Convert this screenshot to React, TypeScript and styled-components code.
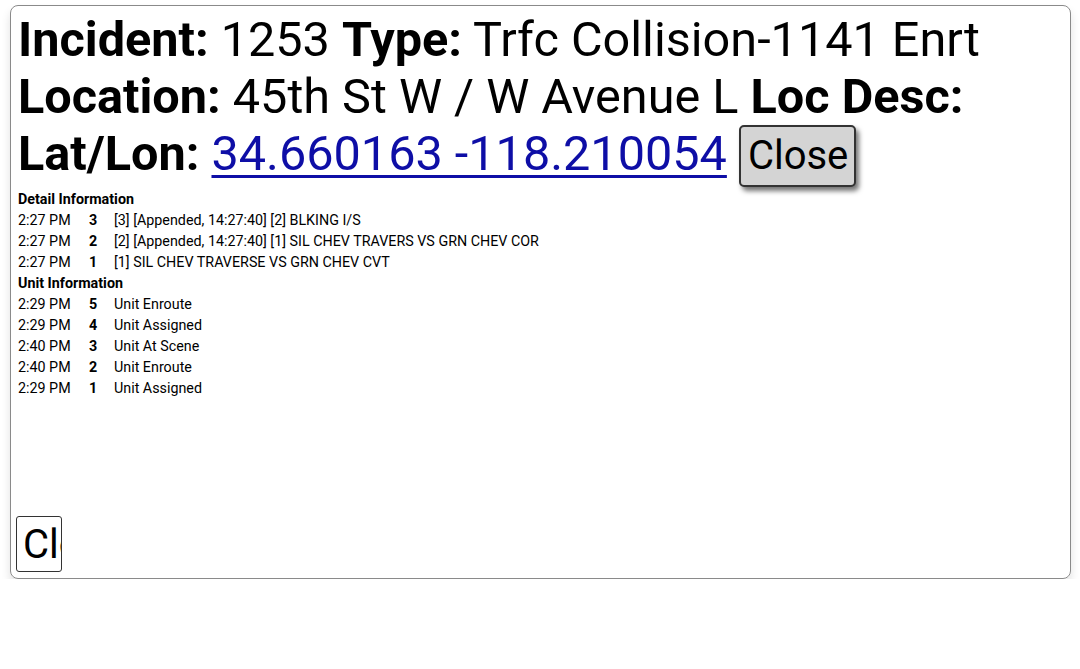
import React from "react";
import styled, { createGlobalStyle } from "styled-components";

const GlobalStyle = createGlobalStyle`
  html, body {
    margin: 0;
    padding: 0;
    background: #ffffff;
    font-family: Roboto, "Liberation Sans", sans-serif;
    color: #000;
  }
`;

const Page = styled.div`
  padding: 5px 9px 0 10px;
`;

const Panel = styled.div`
  box-sizing: border-box;
  height: 574px;
  border: 1px solid #8a8a8a;
  border-radius: 8px;
  box-shadow: 0 6px 10px rgba(0, 0, 0, 0.12);
  padding: 5px 8px 6px 7px;
  display: flex;
  flex-direction: column;
`;

const Header = styled.div`
  font-size: 48.6px;
  line-height: 57px;
  b {
    font-weight: 700;
  }
`;

const CoordLink = styled.a`
  color: #0e0ea6;
  text-decoration: underline;
  text-decoration-thickness: 3px;
  text-underline-offset: 5px;
`;

const CloseButton = styled.button`
  box-sizing: border-box;
  height: 62px;
  font-family: Roboto, "Liberation Sans", sans-serif;
  font-size: 40px;
  line-height: 46px;
  padding: 0 6px 0 7px;
  margin-left: 12px;
  background: #d4d4d4;
  color: #000;
  border: 2px solid #333;
  border-radius: 5px;
  box-shadow: 3px 4px 5px rgba(0, 0, 0, 0.55);
  vertical-align: top;
`;

const Info = styled.table`
  border-collapse: collapse;
  font-size: 14.3px;
  line-height: 21px;
  margin-top: 2px;
  td {
    padding: 0;
    white-space: nowrap;
  }
`;

const SectionTitle = styled.td`
  font-weight: 700;
`;

const TimeCell = styled.td`
  width: 71px;
`;

const NumCell = styled.td`
  width: 25px;
  font-weight: 700;
`;

const Spacer = styled.div`
  flex: 1;
`;

const StubButton = styled.button`
  width: 46px;
  height: 56px;
  padding: 0 0 0 6px;
  margin-left: -2px;
  overflow: hidden;
  white-space: nowrap;
  text-align: left;
  font-family: Roboto, "Liberation Sans", sans-serif;
  font-size: 40px;
  background: #fff;
  color: #000;
  border: 1px solid #333;
  border-radius: 3px;
`;

type Entry = { time: string; num: number; text: string };

const details: Entry[] = [
  { time: "2:27 PM", num: 3, text: "[3] [Appended, 14:27:40] [2] BLKING I/S" },
  { time: "2:27 PM", num: 2, text: "[2] [Appended, 14:27:40] [1] SIL CHEV TRAVERS VS GRN CHEV COR" },
  { time: "2:27 PM", num: 1, text: "[1] SIL CHEV TRAVERSE VS GRN CHEV CVT" },
];

const units: Entry[] = [
  { time: "2:29 PM", num: 5, text: "Unit Enroute" },
  { time: "2:29 PM", num: 4, text: "Unit Assigned" },
  { time: "2:40 PM", num: 3, text: "Unit At Scene" },
  { time: "2:40 PM", num: 2, text: "Unit Enroute" },
  { time: "2:29 PM", num: 1, text: "Unit Assigned" },
];

function Rows({ title, items }: { title: string; items: Entry[] }) {
  return (
    <>
      <tr>
        <SectionTitle colSpan={3}>{title}</SectionTitle>
      </tr>
      {items.map((e, i) => (
        <tr key={i}>
          <TimeCell>{e.time}</TimeCell>
          <NumCell>{e.num}</NumCell>
          <td>{e.text}</td>
        </tr>
      ))}
    </>
  );
}

export default function App() {
  return (
    <>
      <GlobalStyle />
      <Page>
        <Panel>
          <Header>
            <b>Incident:</b> 1253 <b>Type:</b> Trfc Collision-1141 Enrt
            <br />
            <b>Location:</b> 45th St W / W Avenue L <b>Loc Desc:</b>
            <br />
            <b>Lat/Lon:</b> <CoordLink href="#">34.660163 -118.210054</CoordLink>
            <CloseButton>Close</CloseButton>
          </Header>
          <Info>
            <tbody>
              <Rows title="Detail Information" items={details} />
              <Rows title="Unit Information" items={units} />
            </tbody>
          </Info>
          <Spacer />
          <div>
            <StubButton>Close</StubButton>
          </div>
        </Panel>
      </Page>
    </>
  );
}
